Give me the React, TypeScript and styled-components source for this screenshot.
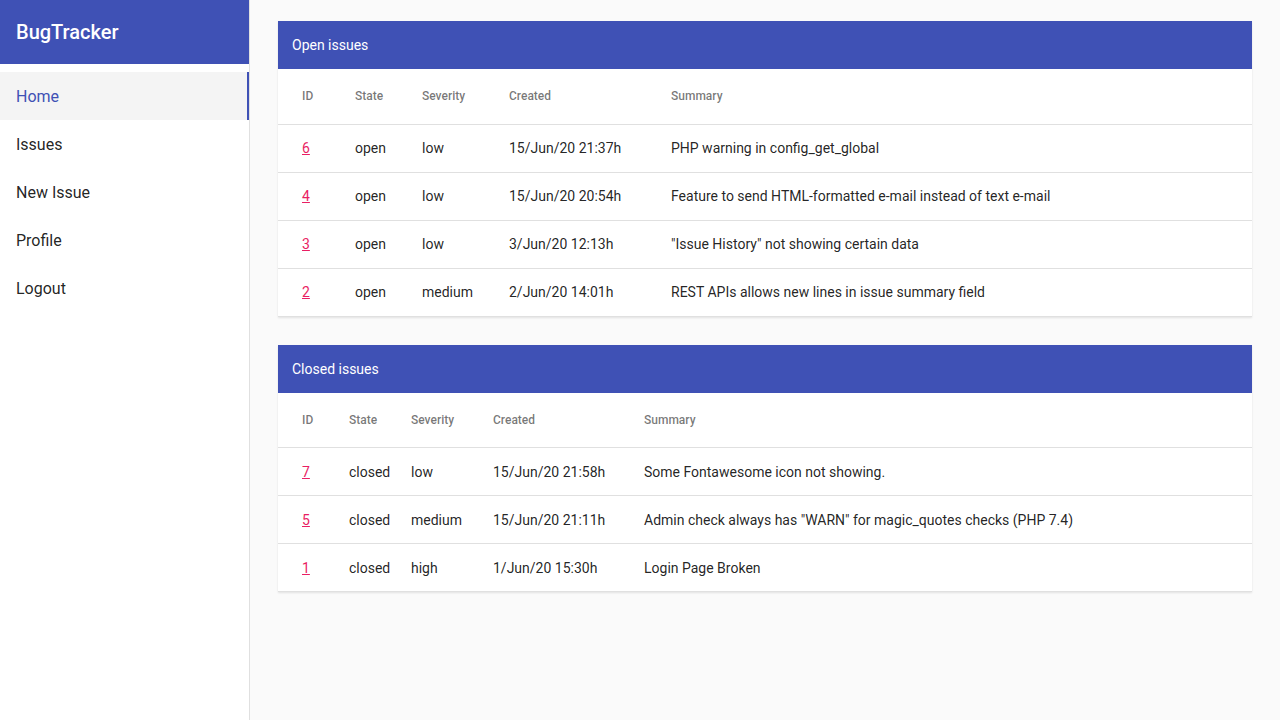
import React from "react";
import styled, { createGlobalStyle } from "styled-components";

const Global = createGlobalStyle`
  html, body { margin: 0; padding: 0; background: #fafafa; }
  body { font-family: Roboto, "Noto Sans", Arial, sans-serif; color: rgba(0,0,0,0.87); }
  * { box-sizing: border-box; }
`;

const Layout = styled.div`
  display: flex;
  min-height: 720px;
`;

const Sidebar = styled.aside`
  width: 250px;
  flex: 0 0 250px;
  background: #fff;
  border-right: 1px solid #e0e0e0;
  display: flex;
  flex-direction: column;
`;

const Brand = styled.div`
  height: 64px;
  background: #3f51b5;
  color: #fff;
  font-size: 20px;
  font-weight: 500;
  display: flex;
  align-items: center;
  padding-left: 16px;
  margin-bottom: 8px;
`;

const NavItem = styled.div<{ $active?: boolean }>`
  height: 48px;
  display: flex;
  align-items: center;
  padding-left: 16px;
  font-size: 16px;
  color: ${(p) => (p.$active ? "#3f51b5" : "rgba(0,0,0,0.87)")};
  background: ${(p) => (p.$active ? "#f4f4f4" : "transparent")};
  border-right: 2px solid ${(p) => (p.$active ? "#3f51b5" : "transparent")};
`;

const Main = styled.main`
  flex: 1;
  padding: 21px 28px;
  display: flex;
  flex-direction: column;
  gap: 28px;
`;

const Card = styled.section`
  background: #fff;
  box-shadow: 0 1px 2px rgba(0,0,0,0.1);
`;

const CardHeader = styled.div`
  height: 48px;
  background: #3f51b5;
  color: #fff;
  font-size: 14px;
  display: flex;
  align-items: center;
  padding-left: 14px;
`;

const Table = styled.table`
  width: 100%;
  border-collapse: collapse;
  table-layout: fixed;
`;

const Th = styled.th`
  height: 55px;
  text-align: left;
  font-size: 12px;
  font-weight: 500;
  color: rgba(0,0,0,0.54);
  padding: 0;
  border-bottom: 1px solid #e0e0e0;
  &:first-child { padding-left: 24px; }
`;

const Td = styled.td`
  height: 48px;
  font-size: 14px;
  padding: 0;
  border-bottom: 1px solid #e0e0e0;
  color: rgba(0,0,0,0.87);
  &:first-child { padding-left: 24px; }
`;

const IssueLink = styled.a`
  color: #e91e63;
  text-decoration: underline;
`;

type Issue = { id: number; state: string; severity: string; created: string; summary: string };

const openIssues: Issue[] = [
  { id: 6, state: "open", severity: "low", created: "15/Jun/20 21:37h", summary: "PHP warning in config_get_global" },
  { id: 4, state: "open", severity: "low", created: "15/Jun/20 20:54h", summary: "Feature to send HTML-formatted e-mail instead of text e-mail" },
  { id: 3, state: "open", severity: "low", created: "3/Jun/20 12:13h", summary: "\"Issue History\" not showing certain data" },
  { id: 2, state: "open", severity: "medium", created: "2/Jun/20 14:01h", summary: "REST APIs allows new lines in issue summary field" },
];

const closedIssues: Issue[] = [
  { id: 7, state: "closed", severity: "low", created: "15/Jun/20 21:58h", summary: "Some Fontawesome icon not showing." },
  { id: 5, state: "closed", severity: "medium", created: "15/Jun/20 21:11h", summary: "Admin check always has \"WARN\" for magic_quotes checks (PHP 7.4)" },
  { id: 1, state: "closed", severity: "high", created: "1/Jun/20 15:30h", summary: "Login Page Broken" },
];

function IssueTable({ title, issues, cols }: { title: string; issues: Issue[]; cols: number[] }) {
  return (
    <Card>
      <CardHeader>{title}</CardHeader>
      <Table>
        <colgroup>
          {cols.map((w, i) => (
            <col key={i} style={{ width: w }} />
          ))}
          <col />
        </colgroup>
        <thead>
          <tr>
            <Th>ID</Th>
            <Th>State</Th>
            <Th>Severity</Th>
            <Th>Created</Th>
            <Th>Summary</Th>
          </tr>
        </thead>
        <tbody>
          {issues.map((it) => (
            <tr key={it.id}>
              <Td>
                <IssueLink href="#">{it.id}</IssueLink>
              </Td>
              <Td>{it.state}</Td>
              <Td>{it.severity}</Td>
              <Td>{it.created}</Td>
              <Td>{it.summary}</Td>
            </tr>
          ))}
        </tbody>
      </Table>
    </Card>
  );
}

export default function App() {
  return (
    <>
      <Global />
      <Layout>
        <Sidebar>
          <Brand>BugTracker</Brand>
          <NavItem $active>Home</NavItem>
          <NavItem>Issues</NavItem>
          <NavItem>New Issue</NavItem>
          <NavItem>Profile</NavItem>
          <NavItem>Logout</NavItem>
        </Sidebar>
        <Main>
          <IssueTable title="Open issues" issues={openIssues} cols={[77, 67, 87, 162]} />
          <IssueTable title="Closed issues" issues={closedIssues} cols={[71, 62, 82, 151]} />
        </Main>
      </Layout>
    </>
  );
}
